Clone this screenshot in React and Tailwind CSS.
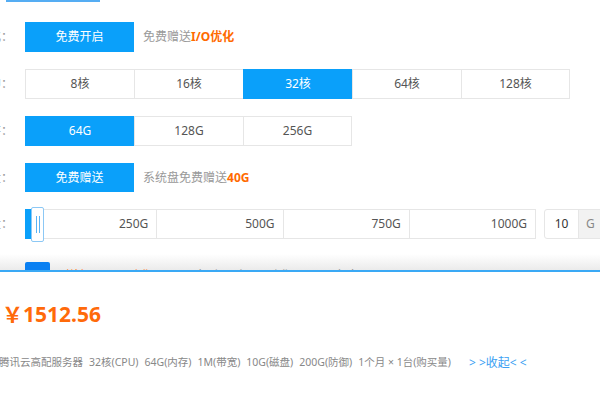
import React from "react";

const BLUE = "bg-[#0aa0fa]";

const Label = ({ text }) => (
  <div className="w-[25px] shrink-0 flex justify-end pr-[12px] text-[12px] text-[#999]">
    <span className="whitespace-nowrap">{text}</span>
  </div>
);

const Options = ({ items, active, width = "w-[109px]" }) => (
  <div className="flex">
    {items.map((item, i) => (
      <div
        key={item}
        className={`${width} h-[30px] flex items-center justify-center text-[12px] border-y border-l ${
          i === items.length - 1 ? "border-r" : ""
        } ${
          item === active
            ? "bg-[#0aa0fa] border-[#0aa0fa] text-white"
            : "border-[#e6e6e6] text-[#555] bg-white"
        }`}
      >
        {item}
      </div>
    ))}
  </div>
);

const SliderRow = () => {
  const marks = ["250G", "500G", "750G", "1000G"];
  return (
    <div className="flex items-center h-[30px]">
      <Label text="数据盘：" />
      <div className="relative shrink-0 flex h-[30px] border border-[#e6e6e6] w-[511px]">
        <div className="w-[6px] bg-[#0aa0fa] -my-px -ml-px"></div>
        {marks.map((m, i) => (
          <div
            key={m}
            className={`flex-1 flex items-center justify-end pr-[8px] text-[12px] text-[#555] ${
              i > 0 ? "border-l border-[#e6e6e6]" : ""
            }`}
          >
            {m}
          </div>
        ))}
        <div className="absolute left-[5px] top-[-3px] w-[13px] h-[35px] bg-white border border-[#8cc8f5] rounded-[2px] flex items-center justify-center gap-[2px]">
          <div className="w-px h-[17px] bg-[#5ab3f5]"></div>
          <div className="w-px h-[17px] bg-[#5ab3f5]"></div>
        </div>
      </div>
      <div className="ml-[8px] shrink-0 flex h-[30px] border border-[#e6e6e6] rounded-l-[3px]">
        <div className="w-[33px] flex items-center justify-center text-[12px] text-[#333]">10</div>
        <div className="w-[30px] flex items-center pl-[7px] text-[12px] text-[#888] bg-[#f2f2f2] border-l border-[#e6e6e6]">G</div>
      </div>
    </div>
  );
};

export default function App() {
  return (
    <div
      className="w-[600px] h-[400px] overflow-hidden flex flex-col bg-white"
      style={{ fontFamily: '"Noto Sans", "Noto Sans CJK SC", sans-serif' }}
    >
      <div className="relative h-[270px] overflow-hidden shrink-0">
        <div className="absolute left-0 right-0 bottom-0 h-[16px] bg-gradient-to-b from-transparent to-[#ebebeb]"></div>

        <div className="h-[2px] ml-[6px] w-[94px] bg-[#55adf3]"></div>

        <div className="mt-[20px] flex flex-col gap-[17px]">
          <div className="flex items-center h-[30px]">
            <Label text="I/O优化：" />
            <div className={`w-[109px] h-[30px] ${BLUE} text-white text-[12px] flex items-center justify-center`}>
              免费开启
            </div>
            <div className="ml-[9px] text-[12px] text-[#999]">
              免费赠送<span className="text-[#ff6a00] font-bold">I/O优化</span>
            </div>
          </div>

          <div className="flex items-center h-[30px]">
            <Label text="CPU：" />
            <Options items={["8核", "16核", "32核", "64核", "128核"]} active="32核" />
          </div>

          <div className="flex items-center h-[30px]">
            <Label text="内存：" />
            <Options items={["64G", "128G", "256G"]} active="64G" />
          </div>

          <div className="flex items-center h-[29px]">
            <Label text="系统盘：" />
            <div className={`w-[109px] h-[29px] ${BLUE} text-white text-[12px] flex items-center justify-center`}>
              免费赠送
            </div>
            <div className="ml-[9px] text-[12px] text-[#999]">
              系统盘免费赠送<span className="text-[#ff6a00] font-bold">40G</span>
            </div>
          </div>

          <SliderRow />
        </div>

        <div className="relative mt-[23px] flex items-center h-[30px]">
          <Label text="防御：" />
          <div className="w-[25px] h-[30px] bg-[#0a80f2] rounded-[2px] text-white text-[14px] flex items-center justify-center">+</div>
          <div className="ml-[15px] mb-[4px] text-[14px] text-[#ff7a1a]">增加200G防御</div>
          <div className="ml-[38px] mb-[4px] text-[14px] text-[#999]">高防服务器 防御DDoS攻击</div>
        </div>
      </div>

      <div className="flex-1 border-t-2 border-[#3aa9f5] bg-white">
        <div className="mt-[28px] ml-[2px] text-[21px] font-bold text-[#ff6a0a] leading-[28px]">
          ￥1512.56
        </div>
        <div className="mt-[26px] flex items-center text-[10.5px] text-[#888] whitespace-nowrap">
          <span className="-ml-[1px]">腾讯云高配服务器</span>
          <span className="ml-[6px]">32核(CPU)</span>
          <span className="ml-[6px]">64G(内存)</span>
          <span className="ml-[6px]">1M(带宽)</span>
          <span className="ml-[6px]">10G(磁盘)</span>
          <span className="ml-[6px]">200G(防御)</span>
          <span className="ml-[6px]">1个月 × 1台(购买量)</span>
          <span className="ml-[18px] text-[12px] text-[#3b9ff3]">&gt; &gt;收起&lt; &lt;</span>
        </div>
      </div>
    </div>
  );
}
